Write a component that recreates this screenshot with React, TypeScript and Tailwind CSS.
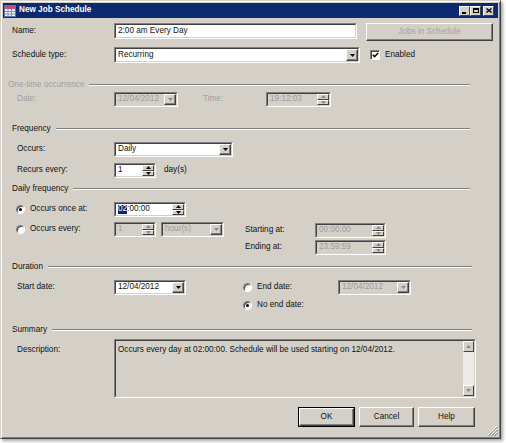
import React from "react";

const sunken = "border border-t-[#808080] border-l-[#808080] border-r-white border-b-white";
const sunkenInner = "border border-t-[#404040] border-l-[#404040] border-r-[#d4d0c8] border-b-[#d4d0c8]";
const raised =
  "bg-[#d4d0c8] border border-t-white border-l-white border-r-[#404040] border-b-[#404040] shadow-[inset_-1px_-1px_0_#808080]";
const raisedThin = "bg-[#d4d0c8] border border-t-white border-l-white border-r-[#404040] border-b-[#404040]";

function Tri({ down = true, dis = false }: { down?: boolean; dis?: boolean }) {
  return (
    <svg width="5" height="3" viewBox="0 0 5 3" className="overflow-visible">
      <path d={down ? "M0 0H5L2.5 3Z" : "M0 3H5L2.5 0Z"} fill={dis ? "#8a8a8a" : "#000"} />
    </svg>
  );
}

function Field({
  cls,
  disabled,
  gray,
  children,
}: {
  cls: string;
  disabled?: boolean;
  gray?: boolean;
  children?: React.ReactNode;
}) {
  return (
    <div className={`${sunken} ${cls} flex shrink-0`}>
      <div
        className={`${sunkenInner} flex-1 flex items-stretch min-w-0 ${
          disabled ? "bg-[#d4d0c8] text-[#9c9c9c]" : gray ? "bg-[#d4d0c8] text-[#111]" : "bg-white text-[#111]"
        }`}
      >
        {children}
      </div>
    </div>
  );
}

function Txt({ children }: { children?: React.ReactNode }) {
  return <div className="flex-1 flex items-center pl-[2px] whitespace-nowrap overflow-hidden">{children}</div>;
}

function Drop({ dis }: { dis?: boolean }) {
  return (
    <div className={`${raised} w-[12px] shrink-0 flex items-center justify-center`}>
      <Tri dis={dis} />
    </div>
  );
}

function Spin({ dis }: { dis?: boolean }) {
  return (
    <div className="w-[12px] shrink-0 flex flex-col">
      <div className={`${raisedThin} flex-1 flex items-center justify-center`}>
        <Tri down={false} dis={dis} />
      </div>
      <div className={`${raisedThin} flex-1 flex items-center justify-center`}>
        <Tri dis={dis} />
      </div>
    </div>
  );
}

function Radio({ checked }: { checked?: boolean }) {
  return (
    <span className="w-[9px] h-[9px] shrink-0 rounded-full bg-white border border-t-[#808080] border-l-[#808080] border-r-white border-b-white shadow-[inset_1px_1px_0_#404040] flex items-center justify-center">
      {checked && <span className="w-[3px] h-[3px] rounded-full bg-black" />}
    </span>
  );
}

function Group({ title, disabled, cls }: { title: string; disabled?: boolean; cls: string }) {
  return (
    <div className={`flex items-center h-[12px] ${cls}`}>
      <span className={disabled ? "text-[#a0a0a0]" : ""}>{title}</span>
      <div className="flex-1 ml-[5px] h-0 border-t border-t-[#808080] border-b border-b-white" />
    </div>
  );
}

function TitleBtn({ children, cls = "" }: { children: React.ReactNode; cls?: string }) {
  return (
    <div className={`${raisedThin} w-[11px] h-[10px] flex items-center justify-center ${cls}`}>{children}</div>
  );
}

export default function App() {
  return (
    <div className="w-[506px] h-[443px] bg-white overflow-hidden font-['Liberation_Sans',Arial,sans-serif] text-[8.2px] leading-none text-[#111]">
      <div className="relative w-[501px] h-[439px] bg-[#d4d0c8] border border-[#d4d0c8] border-r-[#404040] border-b-[#404040] shadow-[inset_1px_1px_0_#fff,inset_-1px_-1px_0_#808080,2px_2px_3px_rgba(0,0,0,0.35)] p-[2px] flex flex-col">
        {/* Title bar */}
        <div className="h-[15px] bg-[#0b2a6f] flex items-center pl-[1px] pr-[4px] shrink-0">
          <svg width="12" height="12" viewBox="0 0 12 12">
            <rect x="0.5" y="0.5" width="11" height="11" fill="#f4f2fb" stroke="#5a6fb0" />
            <rect x="1" y="1" width="10" height="3" fill="#c2507a" />
            <path d="M1 6.5H11M1 9H11M4 4V11M7.5 4V11" stroke="#7f8fd0" strokeWidth="1" />
          </svg>
          <span className="ml-[3px] font-bold text-white text-[8.2px]">New Job Schedule</span>
          <div className="ml-auto flex items-center">
            <TitleBtn>
              <div className="w-[4px] h-[2px] bg-black mt-[4px] mr-[2px]" />
            </TitleBtn>
            <TitleBtn>
              <div className="w-[6px] h-[5px] border border-black border-t-2" />
            </TitleBtn>
            <TitleBtn cls="ml-[2px]">
              <svg width="6" height="5" viewBox="0 0 6 5">
                <path d="M0.5 0.5L5.5 4.5M5.5 0.5L0.5 4.5" stroke="#000" strokeWidth="1.4" />
              </svg>
            </TitleBtn>
          </div>
        </div>

        {/* Content */}
        <div className="flex flex-col pl-[9px]">
          {/* Name */}
          <div className="flex items-start mt-[5px]">
            <div className="w-[102px] h-[16px] flex items-center">Name:</div>
            <Field cls="w-[243px] h-[16px]">
              <Txt>2:00 am Every Day</Txt>
            </Field>
            <div
              className={`${raised} ml-[9px] w-[127px] h-[18px] flex items-center justify-center text-[#a3a3a3]`}
            >
              Jobs in Schedule
            </div>
          </div>

          {/* Schedule type */}
          <div className="flex items-center mt-[6px] h-[16px]">
            <div className="w-[102px]">Schedule type:</div>
            <Field cls="w-[246px] h-[16px]">
              <Txt>Recurring</Txt>
              <Drop />
            </Field>
            <span className="ml-[10px] w-[10px] h-[10px] bg-white border border-t-[#808080] border-l-[#808080] border-r-white border-b-white shadow-[inset_1px_1px_0_#404040] flex items-center justify-center">
              <svg width="7" height="6" viewBox="0 0 7 6">
                <path d="M0.8 2.8L2.6 4.6L6.2 1" stroke="#000" strokeWidth="1.5" fill="none" />
              </svg>
            </span>
            <span className="ml-[5px]">Enabled</span>
          </div>

          {/* One-time occurrence */}
          <Group title="One-time occurrence" disabled cls="mt-[16px] ml-[-4px] w-[462px]" />
          <div className="flex items-center mt-[1px] h-[15px] text-[#a0a0a0]">
            <div className="w-[102px] pl-[5px]">Date:</div>
            <Field cls="w-[64px] h-[15px]" disabled>
              <Txt>12/04/2012</Txt>
              <Drop dis />
            </Field>
            <div className="ml-[25px] w-[63px]">Time:</div>
            <Field cls="w-[65px] h-[15px]" disabled>
              <Txt>19:12:03</Txt>
              <Spin dis />
            </Field>
          </div>

          {/* Frequency */}
          <Group title="Frequency" cls="mt-[16px] w-[458px]" />
          <div className="flex items-center mt-[7px] h-[15px]">
            <div className="w-[102px] pl-[5px]">Occurs:</div>
            <Field cls="w-[119px] h-[15px]">
              <Txt>Daily</Txt>
              <Drop />
            </Field>
          </div>
          <div className="flex items-center mt-[6px] h-[15px]">
            <div className="w-[102px] pl-[5px]">Recurs every:</div>
            <Field cls="w-[42px] h-[15px]">
              <Txt>1</Txt>
              <Spin />
            </Field>
            <span className="ml-[8px]">day(s)</span>
          </div>

          {/* Daily frequency */}
          <Group title="Daily frequency" cls="mt-[5px] w-[458px]" />
          <div className="flex mt-[7px]">
            <div className="w-[233px] flex flex-col">
              <div className="flex items-center h-[15px]">
                <div className="w-[102px] pl-[4px] flex items-center gap-[5px]">
                  <Radio checked />
                  <span>Occurs once at:</span>
                </div>
                <Field cls="w-[72px] h-[15px]">
                  <Txt>
                    <span className="bg-[#0a246a] text-white">02</span>:00:00
                  </Txt>
                  <Spin />
                </Field>
              </div>
              <div className="flex items-center h-[15px] mt-[5px]">
                <div className="w-[102px] pl-[4px] flex items-center gap-[5px]">
                  <Radio />
                  <span>Occurs every:</span>
                </div>
                <Field cls="w-[42px] h-[15px]" disabled>
                  <Txt>1</Txt>
                  <Spin dis />
                </Field>
                <div className="ml-[5px]">
                  <Field cls="w-[63px] h-[15px]" disabled>
                    <Txt>hour(s)</Txt>
                    <Drop dis />
                  </Field>
                </div>
              </div>
            </div>
            <div className="flex flex-col pt-[21px]">
              <div className="flex items-center h-[15px]">
                <div className="w-[70px]">Starting at:</div>
                <Field cls="w-[71px] h-[15px]" disabled>
                  <Txt>00:00:00</Txt>
                  <Spin dis />
                </Field>
              </div>
              <div className="flex items-center h-[15px] mt-[2px]">
                <div className="w-[70px]">Ending at:</div>
                <Field cls="w-[71px] h-[15px]" disabled>
                  <Txt>23:59:59</Txt>
                  <Spin dis />
                </Field>
              </div>
            </div>
          </div>

          {/* Duration */}
          <Group title="Duration" cls="mt-[6px] w-[460px]" />
          <div className="flex mt-[7px]">
            <div className="w-[231px] flex items-center h-[15px]">
              <div className="w-[102px] pl-[5px]">Start date:</div>
              <Field cls="w-[72px] h-[15px]">
                <Txt>12/04/2012</Txt>
                <Drop />
              </Field>
            </div>
            <div className="flex flex-col">
              <div className="flex items-center h-[15px]">
                <div className="w-[95px] flex items-center gap-[5px]">
                  <Radio />
                  <span>End date:</span>
                </div>
                <Field cls="w-[73px] h-[15px]" disabled>
                  <Txt>12/04/2012</Txt>
                  <Drop dis />
                </Field>
              </div>
              <div className="flex items-center h-[15px] mt-[3px] gap-[5px]">
                <Radio checked />
                <span>No end date:</span>
              </div>
            </div>
          </div>

          {/* Summary */}
          <Group title="Summary" cls="mt-[11px] w-[460px]" />
          <div className="flex items-start mt-[3px]">
            <div className="w-[102px] pl-[5px] pt-[7px]">Description:</div>
            <Field cls="w-[362px] h-[59px]" gray>
              <div className="flex-1 pl-[2px] pt-[5px] whitespace-nowrap overflow-hidden">
                Occurs every day at 02:00:00. Schedule will be used starting on 12/04/2012.
              </div>
              <div className="w-[11px] shrink-0 flex flex-col">
                <div className={`${raisedThin} h-[11px] flex items-center justify-center`}>
                  <Tri down={false} dis />
                </div>
                <div className="flex-1 bg-[#ecebe7]" />
                <div className={`${raisedThin} h-[11px] flex items-center justify-center`}>
                  <Tri dis />
                </div>
              </div>
            </Field>
          </div>

          {/* Buttons */}
          <div className="flex justify-end gap-[4px] mt-[9px] w-[463px]">
            <div className="w-[57px] h-[20px] border border-black flex">
              <div className={`${raised} flex-1 flex items-center justify-center`}>OK</div>
            </div>
            <div className={`${raised} w-[55px] h-[20px] flex items-center justify-center`}>Cancel</div>
            <div className={`${raised} w-[57px] h-[20px] flex items-center justify-center`}>Help</div>
          </div>
        </div>

        {/* Resize grip */}
        <svg className="absolute right-[2px] bottom-[2px]" width="11" height="11" viewBox="0 0 11 11">
          <path d="M10 1L1 10M10 4L4 10M10 7L7 10" stroke="#fff" strokeWidth="1" />
          <path d="M11 1.5L1.5 11M11 4.5L4.5 11M11 7.5L7.5 11" stroke="#808080" strokeWidth="1" />
        </svg>
      </div>
    </div>
  );
}
